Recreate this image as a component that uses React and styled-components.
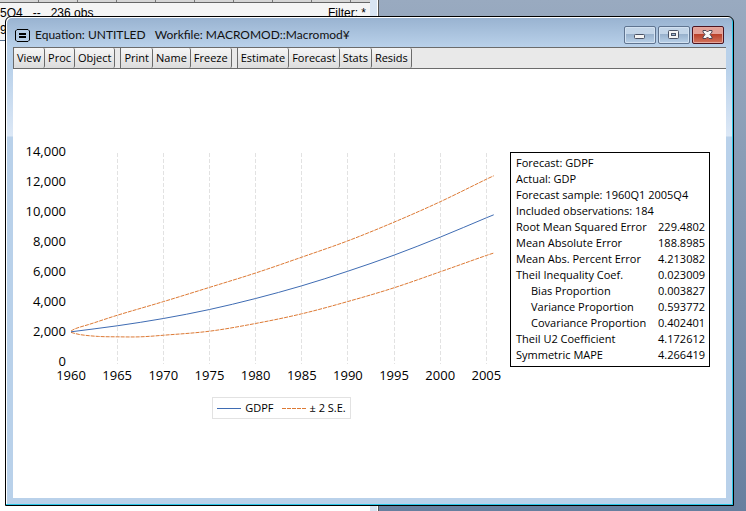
import styled, { createGlobalStyle } from "styled-components";

const GlobalStyle = createGlobalStyle`
  * {
    box-sizing: border-box;
  }
  body {
    margin: 0;
    font-family: "Open Sans", "Noto Sans", sans-serif;
    color: #000;
  }
`;

const toolGroups = [
  ["View", "Proc", "Object"],
  ["Print", "Name", "Freeze"],
  ["Estimate", "Forecast", "Stats", "Resids"],
];

const summary = [
  "Forecast: GDPF",
  "Actual: GDP",
  "Forecast sample: 1960Q1 2005Q4",
  "Included observations: 184",
];

const stats = [
  { name: "Root Mean Squared Error", value: "229.4802" },
  { name: "Mean Absolute Error", value: "188.8985" },
  { name: "Mean Abs. Percent Error", value: "4.213082" },
  { name: "Theil Inequality Coef.", value: "0.023009" },
  { name: "Bias Proportion", value: "0.003827", indent: true },
  { name: "Variance Proportion", value: "0.593772", indent: true },
  { name: "Covariance Proportion", value: "0.402401", indent: true },
  { name: "Theil U2 Coefficient", value: "4.172612" },
  { name: "Symmetric MAPE", value: "4.266419" },
];

// [year, value]
const gdpf = [
  [1960, 2080], [1965, 2480], [1970, 2965], [1975, 3565], [1980, 4300], [1985, 5145],
  [1990, 6120], [1995, 7190], [2000, 8390], [2005, 9680], [2005.8, 9880],
];
const upper = [
  [1960, 2130], [1960.4, 2270], [1961, 2400], [1962, 2580], [1965, 3180], [1970, 4090],
  [1975, 5040], [1980, 6000], [1985, 7055], [1990, 8145], [1995, 9390], [2000, 10750],
  [2005, 12250], [2005.8, 12480],
];
const lower = [
  [1960, 2040], [1961, 1890], [1963, 1770], [1965, 1745], [1967.5, 1745], [1970, 1850],
  [1975, 2120], [1980, 2635], [1985, 3280], [1990, 4100], [1995, 5015], [2000, 6080],
  [2005, 7170], [2005.8, 7330],
];

const yTicks = [0, 2000, 4000, 6000, 8000, 10000, 12000, 14000];
const xTicks = [1960, 1965, 1970, 1975, 1980, 1985, 1990, 1995, 2000, 2005];

const scaleX = (year) => 48 + (year - 1960) * 9.23;
const scaleY = (value) => 223 - value * 0.015;

// smooth curve through every point
function linePath(data) {
  const p = data.map(([year, value]) => [scaleX(year), scaleY(value)]);
  let d = `M${p[0][0]},${p[0][1]}`;
  for (let i = 0; i < p.length - 1; i++) {
    const h = (p[i + 1][0] - p[i][0]) / 3;
    const slope = (j) => {
      const a = p[Math.max(j - 1, 0)];
      const b = p[Math.min(j + 1, p.length - 1)];
      return (b[1] - a[1]) / (b[0] - a[0]);
    };
    d += ` C${p[i][0] + h},${p[i][1] + slope(i) * h}`;
    d += ` ${p[i + 1][0] - h},${p[i + 1][1] - slope(i + 1) * h}`;
    d += ` ${p[i + 1][0]},${p[i + 1][1]}`;
  }
  return d;
}

export default function App() {
  return (
    <Desktop>
      <GlobalStyle />
      <WorkfileWindow />
      <EquationWindow>
        <TitleBar>
          <WindowIcon />
          <WindowTitle>Equation: UNTITLED&nbsp;&nbsp; Workfile: MACROMOD::Macromod¥</WindowTitle>
          <Controls />
        </TitleBar>
        <Frame>
          <Toolbar>
            {toolGroups.map((group) => (
              <ToolGroup key={group[0]}>
                {group.map((name) => (
                  <ToolButton key={name}>{name}</ToolButton>
                ))}
              </ToolGroup>
            ))}
          </Toolbar>
          <Content>
            <ChartColumn>
              <Chart />
              <Legend>
                <LegendItem>
                  <Swatch />
                  GDPF
                </LegendItem>
                <LegendItem>
                  <Swatch dashed />
                  ± 2 S.E.
                </LegendItem>
              </Legend>
            </ChartColumn>
            <StatsBox>
              {summary.map((line) => (
                <SummaryLine key={line}>{line}</SummaryLine>
              ))}
              <StatsTable>
                <tbody>
                  {stats.map((item) => (
                    <tr key={item.name}>
                      <StatName scope="row" $indent={item.indent}>{item.name}</StatName>
                      <StatValue>{item.value}</StatValue>
                    </tr>
                  ))}
                </tbody>
              </StatsTable>
            </StatsBox>
          </Content>
        </Frame>
      </EquationWindow>
    </Desktop>
  );
}

function WorkfileWindow() {
  return (
    <BackWindow>
      <BackTop />
      <BackRow>
        <span>5Q4&nbsp; &nbsp;--&nbsp; &nbsp;236 obs</span>
        <span>Filter: *</span>
      </BackRow>
      <BackSecond>9</BackSecond>
    </BackWindow>
  );
}

function WindowIcon() {
  return (
    <svg width="15" height="13" viewBox="0 0 15 13">
      <path d="M2 0.5H13L14.5 2V11L13 12.5H2L0.5 11V2Z" fill="#b4cbe4" stroke="#000" />
      <path d="M4 5h7M4 8h7" stroke="#000" strokeWidth="2" />
    </svg>
  );
}

function Controls() {
  return (
    <ControlGroup>
      <ControlButton aria-label="Minimize">
        <svg width="12" height="12" viewBox="0 0 12 12">
          <rect x="0.5" y="5.5" width="10" height="4" rx="1" fill="#f4f4f4" stroke="#4a5265" />
        </svg>
      </ControlButton>
      <ControlButton aria-label="Maximize">
        <svg width="12" height="12" viewBox="0 0 12 12">
          <rect x="0.5" y="1.5" width="10" height="8" rx="1" fill="#f4f4f4" stroke="#4a5265" />
          <rect x="3.5" y="4.5" width="4" height="2" fill="#9db7d3" stroke="#4a5265" />
        </svg>
      </ControlButton>
      <ControlButton aria-label="Close" $close>
        <svg width="12" height="12" viewBox="0 0 12 12">
          <path
            d="M1 1.5H4L5.5 3L7 1.5H10V3L8 5.5L10 8V9.5H7L5.5 8L4 9.5H1V8L3 5.5L1 3Z"
            fill="#f6f6f6"
            stroke="#4e4552"
          />
        </svg>
      </ControlButton>
    </ControlGroup>
  );
}

function Chart() {
  return (
    <ChartSvg viewBox="0 0 480 245" role="img" aria-label="GDPF forecast">
      {xTicks.slice(1).map((year) => (
        <GridLine key={year} x1={Math.floor(scaleX(year)) + 0.5} x2={Math.floor(scaleX(year)) + 0.5} y1="13" y2="224" />
      ))}
      {yTicks.map((value) => (
        <AxisText key={value} x="43" y={scaleY(value) + 3} textAnchor="end">
          {value.toLocaleString("en-US")}
        </AxisText>
      ))}
      {xTicks.map((year) => (
        <AxisText key={year} x={scaleX(year)} y="240" textAnchor="middle">
          {year}
        </AxisText>
      ))}
      <BandLine d={linePath(upper)} />
      <BandLine d={linePath(lower)} />
      <ForecastLine d={linePath(gdpf)} />
    </ChartSvg>
  );
}

function Swatch({ dashed }) {
  return (
    <svg width="24" height="3" viewBox="0 0 24 3">
      {dashed ? <BandLine d="M0 1.5H24" /> : <ForecastLine d="M0 1.5H24" />}
    </svg>
  );
}

const Desktop = styled.div`
  position: relative;
  min-height: 100vh;
  display: flex;
  padding: 16px 12px 5px 5px;
  background: linear-gradient(#99aac0, #677f9f);
`;

const BackWindow = styled.div`
  position: absolute;
  top: 0;
  bottom: 0;
  left: 0;
  width: 379px;
  background: #fff;
  border-right: 1px solid #555;
  box-shadow: inset -1px 0 #fff, inset -8px 0 #d8e4f2;
  font-family: "Liberation Sans", Arial, sans-serif;
  font-size: 12px;
  line-height: 14px;
`;
const BackTop = styled.div`
  height: 3px;
  margin-right: 8px;
  background: repeating-linear-gradient(90deg, #d6d6d6 0 38px, #777 38px 39px);
  border-bottom: 1px solid #666;
`;
const BackRow = styled.div`
  display: flex;
  justify-content: space-between;
  margin-right: 8px;
  padding: 3px 4px 0 0;
  background: #f5f5f5;
`;
const BackSecond = styled.div`
  width: 8px;
  padding-top: 3px;
  height: 21px;
  background: #f5f5f5;
  border-bottom: 1px solid #5b7391;
`;

const EquationWindow = styled.main`
  position: relative;
  flex: 1;
  min-width: 0;
  display: flex;
  flex-direction: column;
  padding: 1px 7px 7px;
  border: 1px solid #000;
  border-radius: 6px 6px 0 0;
  box-shadow: inset -1px -1px #29c5e6, inset 1px 1px #fff;
  background: linear-gradient(#98b2d0, #b9d1ea 30px, #b9d1ea 50px, #dce8f6 119px, #b9d1ea 120px);
`;

const TitleBar = styled.header`
  height: 29px;
  display: flex;
  align-items: center;
  gap: 5px;
  padding: 5px 2px 0;
`;
const WindowTitle = styled.h1`
  margin: 0;
  flex: 1;
  font-family: Lato, "Open Sans", sans-serif;
  font-size: 12px;
  font-weight: 400;
  line-height: 16px;
  color: #111;
  white-space: nowrap;
`;
const ControlGroup = styled.div`
  display: flex;
  gap: 2px;
`;
const ControlButton = styled.button`
  width: 32px;
  height: 18px;
  display: flex;
  align-items: center;
  justify-content: center;
  padding: 0;
  border: 1px solid ${(props) => (props.$close ? "#4d1420" : "#5f7490")};
  border-radius: 2px;
  box-shadow: inset 0 0 0 1px ${(props) => (props.$close ? "#e5a79d" : "#d3e2f2")};
  background: ${(props) =>
    props.$close
      ? "linear-gradient(#e3a097 0 45%, #b9402a 46%, #d3755f)"
      : "linear-gradient(#c3d5e8 0 45%, #98b1cc 46%, #b9d1e9)"};
`;

const Frame = styled.div`
  flex: 1;
  display: flex;
  flex-direction: column;
  background: #fff;
`;
const Toolbar = styled.nav`
  display: flex;
  gap: 5px;
  height: 22px;
  background: #e9e9e9;
  border-top: 1px solid #6b6b6b;
  border-bottom: 1px solid #6b6b6b;
`;
const ToolGroup = styled.div`
  display: flex;
  border-left: 1px solid #6b6b6b;
`;
const ToolButton = styled.button`
  padding: 0 3px;
  border: 0;
  border-right: 1px solid #6b6b6b;
  border-radius: 2px;
  background: linear-gradient(#f6f6f6, #dcdcdc);
  font-family: inherit;
  font-size: 11px;
  line-height: 16px;
  color: #000;
`;

const Content = styled.div`
  flex: 1;
  display: flex;
  align-items: flex-start;
  gap: 7px;
  padding: 71px 16px 20px 10px;
`;
const ChartColumn = styled.div`
  flex: 1;
  min-width: 0;
  display: flex;
  flex-direction: column;
  align-items: center;
  gap: 12px;
`;
const ChartSvg = styled.svg`
  display: block;
  width: 100%;
`;
const GridLine = styled.line`
  stroke: #e2e2e2;
  stroke-dasharray: 4 2;
`;
const AxisText = styled.text`
  font-size: 13px;
`;
const ForecastLine = styled.path`
  fill: none;
  stroke: #3f6cb3;
`;
const BandLine = styled.path`
  fill: none;
  stroke: #dd7a35;
  stroke-dasharray: 4 1;
`;
const Legend = styled.div`
  display: flex;
  gap: 8px;
  margin-left: 37px;
  padding: 2px 4px;
  border: 1px solid #e2e2e2;
  font-size: 11px;
  line-height: 16px;
`;
const LegendItem = styled.div`
  display: flex;
  align-items: center;
  gap: 4px;
`;

const StatsBox = styled.section`
  width: 200px;
  margin-top: 12px;
  padding: 2px 4px 3px 5px;
  border: 1px solid #000;
  font-size: 11px;
  line-height: 16px;
  white-space: nowrap;
`;
const SummaryLine = styled.p`
  margin: 0;
`;
const StatsTable = styled.table`
  width: 100%;
  border-collapse: collapse;
`;
const StatName = styled.th`
  padding: 0 0 0 ${(props) => (props.$indent ? "15px" : "0")};
  font-weight: 400;
  text-align: left;
`;
const StatValue = styled.td`
  padding: 0;
  text-align: right;
`;
